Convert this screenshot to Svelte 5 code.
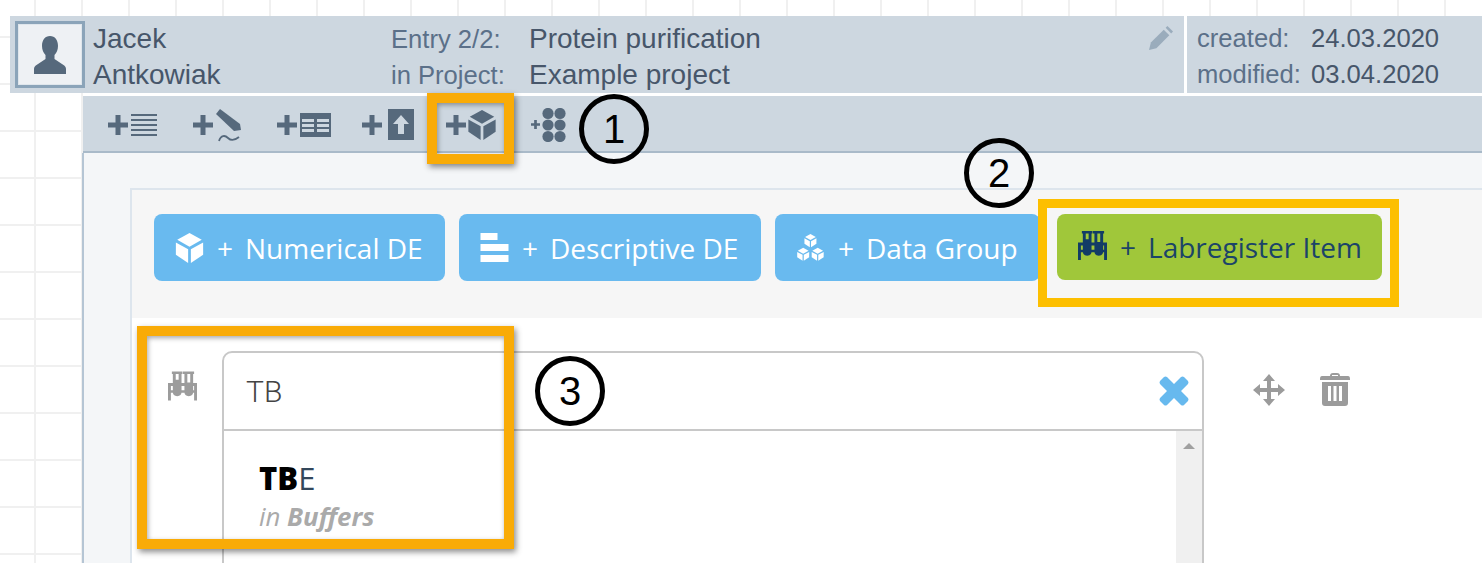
<script>
	const buttons = [
		{ label: 'Numerical DE', icon: 'cube', width: 291 },
		{ label: 'Descriptive DE', icon: 'bars', width: 302 },
		{ label: 'Data Group', icon: 'cubes', width: 265 }
	];
</script>

{#snippet cubeShape()}
	<path d="M12 1 21 6 12 11 3 6Z" />
	<path d="M2 8 11 13V23L2 17Z" />
	<path d="M22 8 13 13V23L22 17Z" />
{/snippet}

{#snippet labreg(cls)}
	<svg class={cls} viewBox="0 0 30 30" fill="currentColor">
		<path d="M4 0h11v2.500h-1V21q0 4.500-4.500 4.500T5 21V2.500H4zM8 2.500v6h3v-6z" fill-rule="evenodd" />
		<path d="M15.500 0H27v2.500h-1V21q0 4.500-4.500 4.500T17 21V2.500h-1.500zM20 2.500v9h3v-9z" fill-rule="evenodd" />
		<path d="M0 12h30v18h-3v-8H3v8H0zM3 15v4.500h24V15z" fill-rule="evenodd" />
	</svg>
{/snippet}

{#snippet plus()}
	<svg class="plus" viewBox="0 0 20 20" fill="currentColor"><path d="M7.500 0h5v7.500H20v5h-7.500V20h-5v-7.500H0v-5h7.500z" /></svg>
{/snippet}

<div class="page">
	<header class="head">
		<div class="avatar">
			<svg viewBox="0 0 32 40" fill="#56697c">
				<path d="M16 1c5 0 8 4 8 10 0 4-1.500 7-3.500 9v4l9 6c1.500 1 2.500 2 2.500 4v5H0v-5c0-2 1-3 2.500-4l9-6v-4C9.500 18 8 15 8 11 8 5 11 1 16 1z" />
			</svg>
		</div>
		<div class="name">Jacek<br />Antkowiak</div>
		<div class="entry">
			<span class="key">Entry 2/2:</span><span class="val">Protein purification</span>
			<span class="key">in Project:</span><span class="val">Example project</span>
			<svg class="pencil" viewBox="0 0 26 26" fill="#9aacbc">
				<path d="M0 26l2-8L16 4l6 6L8 24z" />
				<path d="M18 2l2-2 6 6-2 2z" />
			</svg>
		</div>
		<div class="dates">
			<span class="key">created:</span><span>24.03.2020</span>
			<span class="key">modified:</span><span>03.04.2020</span>
		</div>
	</header>

	<nav class="toolbar">
		<div class="tool">
			{@render plus()}
			<svg class="t-icon" viewBox="0 0 26 22" fill="currentColor">
				<path d="M0 0h26v2H0zM0 5h26v2H0zM0 10h26v2H0zM0 15h26v2H0zM0 20h26v2H0z" />
			</svg>
		</div>
		<div class="tool">
			{@render plus()}
			<svg class="t-icon tall" viewBox="0 0 26 34" fill="currentColor">
				<path d="M4 0l20 15 1 6-7 1L0 5z" />
				<path d="M3 32c2-6 6-6 9-3s6 3 11-1" fill="none" stroke="currentColor" stroke-width="1.800" />
			</svg>
		</div>
		<div class="tool">
			{@render plus()}
			<svg class="t-icon wide" viewBox="0 0 31 24" fill="currentColor">
				<path fill-rule="evenodd" d="M0 0h31v24H0zM2 6v3h12V6zM17 6v3h12V6zM2 11v3h12v-3zM17 11v3h12v-3zM2 16v3h12v-3zM17 16v3h12v-3z" />
			</svg>
		</div>
		<div class="tool">
			{@render plus()}
			<svg class="t-icon upload" viewBox="0 0 26 31" fill="currentColor">
				<path fill-rule="evenodd" d="M0 0h26v31H0zM13 6 5 15h5v10h6V15h5z" />
			</svg>
		</div>
		<div class="tool">
			{@render plus()}
			<svg class="t-icon box" viewBox="2 1 20 22" fill="currentColor">{@render cubeShape()}</svg>
		</div>
		<div class="tool dots">
			<svg class="mini-plus" viewBox="0 0 20 20" fill="currentColor"><path d="M7 0h6v7h7v6h-7v7H7v-7H0V7h7z" /></svg>
			<svg class="dot-grid" viewBox="0 0 24 34" fill="currentColor">
				{#each [5.500, 17, 28.500] as cy}
					{#each [6, 18] as cx}
						<circle {cx} {cy} r="5.600" />
					{/each}
				{/each}
			</svg>
		</div>
	</nav>

	<main class="content">
		<section class="panel">
			<div class="btn-bar">
				{#each buttons as b}
					<div class="btn" style={`width:${b.width}px`}>
						{#if b.icon === 'cube'}
							<svg class="b-icon" viewBox="2 1 20 22" fill="#fff">{@render cubeShape()}</svg>
						{:else if b.icon === 'bars'}
							<svg class="b-icon" viewBox="0 0 28 30" fill="#fff">
								<path d="M0 0h17v7H0zM0 11h28v7H0zM0 22h28v7H0z" />
							</svg>
						{:else}
							<svg class="b-icon" viewBox="0 0 32 32" fill="#fff">
								<g transform="translate(8 0) scale(.66)">{@render cubeShape()}</g>
								<g transform="translate(0 15) scale(.66)">{@render cubeShape()}</g>
								<g transform="translate(16 15) scale(.66)">{@render cubeShape()}</g>
							</svg>
						{/if}
						<span class="add">+</span>
						<span>{b.label}</span>
					</div>
				{/each}
				<div class="btn green">
					{@render labreg('b-icon lab')}
					<span class="add">+</span>
					<span>Labregister Item</span>
				</div>
			</div>

			<div class="row">
				<div class="row-icon">{@render labreg('side-lab')}</div>
				<div class="editor">
					<div class="search">
						<span>TB</span>
						<svg class="clear" viewBox="0 0 30 30" fill="#67b9ee">
							<path d="M8 1l7 7 7-7q1.500-1 3 0l4 4q1 1.500 0 3l-7 7 7 7q1 1.500 0 3l-4 4q-1.500 1-3 0l-7-7-7 7q-1.500 1-3 0l-4-4q-1-1.500 0-3l7-7-7-7q-1-1.500 0-3l4-4q1.500-1 3 0z" />
						</svg>
					</div>
					<div class="results">
						<div class="hit">
							<div class="hit-name"><b>TB</b>E</div>
							<div class="hit-where">in <b>Buffers</b></div>
						</div>
						<div class="scroll"><i></i></div>
					</div>
				</div>
				<div class="actions">
					<svg class="move" viewBox="0 0 32 32" fill="#9b9b9b">
						<path d="M16 0l6 7h-4v7h7v-4l7 6-7 6v-4h-7v7h4l-6 7-6-7h4v-7H7v4l-7-6 7-6v4h7V7h-4z" />
					</svg>
					<svg class="trash" viewBox="0 0 30 33" fill="#9b9b9b">
						<path fill-rule="evenodd" d="M10 3q0-3 3-3h4q3 0 3 3h8q2 0 2 3v1H0V6q0-3 2-3zM12 3h6V2h-6zM2 9h26v21q0 3-3 3H5q-3 0-3-3zM8 13v15h3V13zM13.500 13v15h3V13zM19 13v15h3V13z" />
					</svg>
				</div>
			</div>
		</section>
	</main>

	<div class="mark m1"></div>
	<div class="mark m2"></div>
	<div class="mark m3"></div>
	<div class="num n1">1</div>
	<div class="num n2">2</div>
	<div class="num n3">3</div>
</div>

<style>
	:global(body) {
		margin: 0;
	}

	.page {
		position: relative;
		width: 1482px;
		height: 563px;
		overflow: hidden;
		font-family: 'Liberation Sans', Arial, sans-serif;
		background-color: #fff;
		background-image:
			linear-gradient(to right, #f0f0f0 2px, transparent 2px),
			linear-gradient(to bottom, #f0f0f0 2px, transparent 2px);
		background-size: 47px 47px;
		background-position: 34px 36px;
	}

	.head {
		display: flex;
		margin: 16px 0 0 10px;
		height: 77px;
		background: #cdd7e0;
		font-size: 28px;
		line-height: 36px;
		color: #47566a;
	}

	.avatar {
		box-sizing: border-box;
		width: 70px;
		height: 67px;
		margin: 5px 8px 0 5px;
		border: 3px solid #8ba4b9;
		outline: 1px solid #dfe6ec;
		outline-offset: -4px;
		background: #eef1f4;
		display: flex;
		align-items: center;
		justify-content: center;
	}

	.avatar svg {
		width: 32px;
		height: 40px;
	}

	.name {
		width: 298px;
		padding-top: 5px;
	}

	.entry {
		position: relative;
		box-sizing: border-box;
		width: 793px;
		padding-top: 5px;
		display: grid;
		grid-template-columns: 138px 1fr;
		grid-auto-rows: 36px;
	}

	.key {
		color: #5b7089;
		font-size: 25.600px;
	}

	.pencil {
		position: absolute;
		top: 10px;
		right: 10px;
		width: 26px;
		height: 24px;
	}

	.dates {
		flex: 1;
		border-left: 3px solid #fff;
		padding: 4px 0 0 10px;
		display: grid;
		grid-template-columns: 114px 1fr;
		grid-auto-rows: 36px;
		font-size: 25.600px;
	}

	.toolbar {
		box-sizing: border-box;
		display: flex;
		margin-left: 83px;
		height: 60px;
		padding-left: 25px;
		border-top: 3px solid #fff;
		border-bottom: 2px solid #a9bac9;
		background: #cdd7e0;
		color: #56697c;
	}

	.tool {
		width: 84.500px;
		display: flex;
		align-items: center;
		gap: 3px;
		padding-top: 2px;
		box-sizing: border-box;
	}

	.plus {
		width: 20px;
		height: 20px;
	}

	.t-icon {
		width: 26px;
		height: 22px;
	}

	.t-icon.tall {
		height: 34px;
		margin-top: 3px;
	}

	.t-icon.wide {
		width: 31px;
		height: 24px;
		margin-top: 1px;
	}

	.t-icon.upload {
		height: 31px;
		margin-left: 3px;
	}

	.t-icon.box {
		width: 30px;
		height: 30px;
		margin-left: -2px;
	}

	.mini-plus {
		width: 9px;
		height: 9px;
	}

	.dot-grid {
		width: 24px;
		height: 34px;
		margin-left: -1px;
	}

	.content {
		margin-left: 82px;
		height: 410px;
		box-sizing: border-box;
		padding: 35px 0 0 46px;
		border-left: 2px solid #b5c5d4;
		background: #f4f6f8;
	}

	.panel {
		height: 100%;
		border-top: 2px solid #dde5ed;
		border-left: 2px solid #dde5ed;
		background: #fff;
	}

	.btn-bar {
		display: flex;
		height: 128px;
		box-sizing: border-box;
		padding: 24px 0 0 22px;
		gap: 14px;
		background: #f6f6f6;
	}

	.btn {
		box-sizing: border-box;
		height: 67px;
		display: flex;
		align-items: center;
		padding-left: 21px;
		border-radius: 8px;
		background: #69baef;
		color: #fff;
		font-family: 'Open Sans', sans-serif;
		font-size: 28px;
		white-space: nowrap;
	}

	.add {
		margin: 0 12px 0 13px;
	}

	.btn.green {
		width: 325px;
		margin-left: 3px;
		height: 66px;
		background: #a0c73a;
		color: #1b4468;
	}

	.b-icon {
		width: 29px;
		height: 30px;
		flex: none;
	}

	.btn.green :global(.lab) {
		color: #123c66;
		width: 29px;
		height: 29px;
		margin-top: -3px;
	}

	.row {
		display: flex;
		padding-top: 33px;
	}

	.row-icon {
		width: 90px;
		padding: 20px 0 0 36px;
		box-sizing: border-box;
		color: #9c9c9c;
	}

	.row-icon :global(.side-lab) {
		width: 29px;
		height: 30px;
	}

	.editor {
		box-sizing: border-box;
		width: 982px;
		height: 230px;
		border: 2px solid #c8c8c8;
		border-radius: 10px 10px 0 0;
		background: #fff;
	}

	.search {
		box-sizing: border-box;
		height: 78px;
		display: flex;
		align-items: center;
		justify-content: space-between;
		padding: 0 13px 0 22px;
		border-bottom: 2px solid #c8c8c8;
		font-family: Roboto, sans-serif;
		font-weight: 300;
		font-size: 30px;
		color: #444;
	}

	.clear {
		width: 30px;
		height: 30px;
	}

	.results {
		display: flex;
		justify-content: space-between;
		height: 150px;
	}

	.hit {
		padding: 26px 0 0 35px;
		font-family: 'Open Sans', sans-serif;
	}

	.hit-name {
		font-size: 31px;
		line-height: 42px;
		color: #33475b;
	}

	.hit-name b {
		font-weight: 800;
		color: #000;
	}

	.hit-where {
		font-size: 25.800px;
		line-height: 35px;
		font-style: italic;
		color: #aaa;
	}

	.scroll {
		width: 26px;
		background: #f0f0f0;
		display: flex;
		justify-content: center;
		padding-top: 12px;
		box-sizing: border-box;
	}

	.scroll i {
		width: 0;
		height: 0;
		border-left: 6px solid transparent;
		border-right: 6px solid transparent;
		border-bottom: 6px solid #a0a0a0;
	}

	.actions {
		display: flex;
		gap: 35px;
		padding: 22px 0 0 49px;
		align-items: flex-start;
	}

	.move {
		width: 32px;
		height: 32px;
		margin-top: 1px;
	}

	.trash {
		width: 30px;
		height: 33px;
	}

	.mark {
		position: absolute;
		box-sizing: border-box;
		border: 10px solid #f9ab07;
		box-shadow: 2px 3px 6px rgba(0, 0, 0, 0.45), inset 1px 2px 5px rgba(0, 0, 0, 0.35);
	}

	.m1 {
		left: 427px;
		top: 93px;
		width: 87px;
		height: 71px;
	}

	.m2 {
		left: 1038px;
		top: 199px;
		width: 361px;
		height: 108px;
		border: 9px solid #fdbf00;
		box-shadow: none;
	}

	.m3 {
		left: 137px;
		top: 326px;
		width: 377px;
		height: 223px;
	}

	.num {
		position: absolute;
		box-sizing: border-box;
		width: 70px;
		height: 70px;
		border: 5px solid #000;
		border-radius: 50%;
		display: flex;
		align-items: center;
		justify-content: center;
		font-size: 40px;
		color: #000;
	}

	.n1 {
		left: 579px;
		top: 94px;
	}

	.n2 {
		left: 964px;
		top: 138px;
	}

	.n3 {
		left: 535px;
		top: 356px;
	}
</style>
